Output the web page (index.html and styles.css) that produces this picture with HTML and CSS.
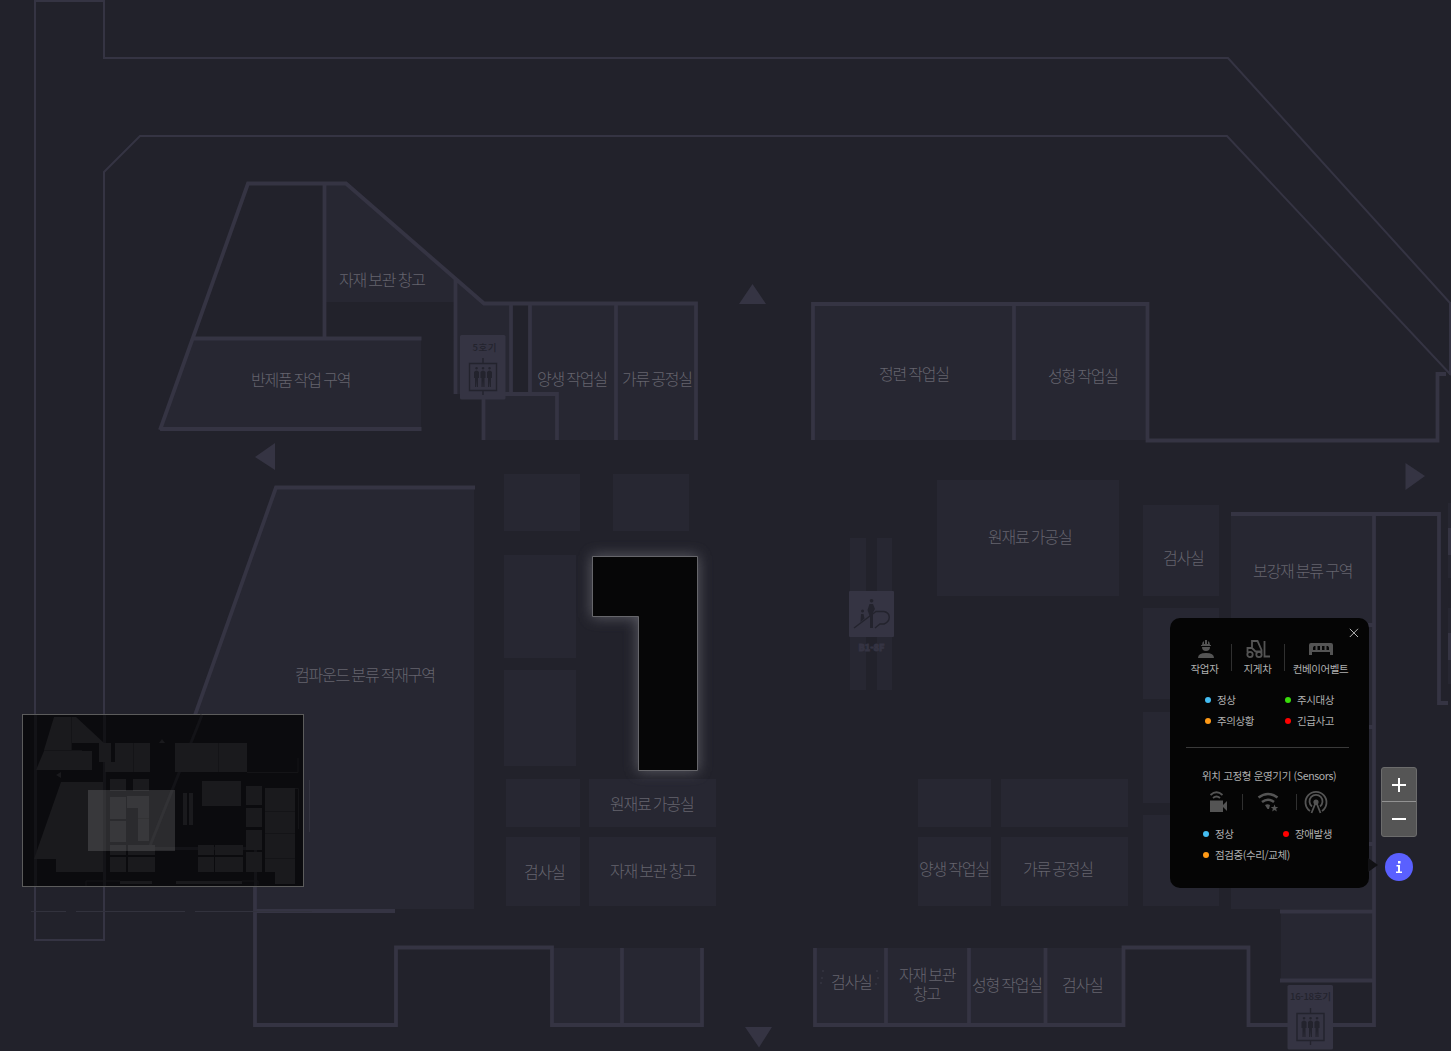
FILE: index.html
```html
<!DOCTYPE html>
<html lang="ko">
<head>
<meta charset="utf-8">
<title>공장 관제 지도</title>
<link rel="stylesheet" href="styles.css">
</head>
<body>
<main class="stage">
<svg class="map" viewBox="0 0 1451 1051" width="1451" height="1051">
  <defs>
    <filter id="glow" x="-30%" y="-30%" width="160%" height="160%"><feGaussianBlur stdDeviation="7"/></filter>
    <g id="lift">
      <rect class="wall-fill" width="45.500" height="64.500" rx="1.500"/>
      <path class="ink-line" d="M9.500 28.500h27v27h-27zM23 23v5M23 56v4"/>
      <g class="ink">
        <path id="man" d="M16.500 34.500a1.300 1.300 0 1 1 .1 0zM14 37q2.500-3 5 0v6h-1v9h-1.100l-.4-7-.4 7H15v-9h-1z"/>
        <use href="#man" x="6.500"/><use href="#man" x="13"/>
      </g>
    </g>
  </defs>

  <g class="room">
    <path d="M325 184H346L455 279V302H325zM193 339H421V429H160zM455 279L484 304H511V394H455zM484 394H557V440H484zM530 304H696V440H557V394H530zM813 304H1147V440H813z"/>
    <path d="M276 488H474V909H255V850H147z"/>
    <path d="M504 474h76v57h-76zM613 474h76v57h-76zM504 555h72v103h-72zM504 670h72v96h-72zM506 779h74v48h-74zM589 779h127v48H589zM506 837h74v69h-74zM589 837h127v69H589z"/>
    <path d="M937 480h182v116H937zM1143 505h76v91h-76zM1143 608h76v91h-76zM1143 712h76v91h-76zM1143 815h76v91h-76zM918 779h73v48h-73zM1001 779h127v48h-127zM918 837h73v69h-73zM1001 837h127v69h-127z"/>
    <path d="M1231 514h143V909h-143zM1281 911h93v69h-93zM552 948H702V1025H552zM815 948H1123V1025H815z"/>
    <path d="M850 538h16v152h-16zM877 538h15v152h-15zM1448 503h3v75h-3zM1448 608h3v76h-3z"/>
  </g>

  <path class="road" d="M35 1H104V58H1228L1451 304M35 0V940H104V172L140 136H1227L1451 375M1450 302V375"/>

  <g class="wall">
    <path d="M193 338.500H421.500M160 429H421.500M160 430L248 183.500H346L484 303.500H696V440M324.500 184V338M455.500 279V394M511 304V394M530 304V394M483.500 394V440M484 394H557V440H557M616 304V440"/>
    <path d="M813 440V304H1147.500V440.500H1437.500V374H1446M1014 304V440"/>
    <path d="M475 487.500H276L147 850H255V1025H396V947.500H552V1025H702V948M255 911H395M622 948V1025"/>
    <path d="M815 948V1025H1123.500V947.500H1248.500V1025H1374V514M886 948V1025M969 948V1025M1045.500 948V1025M1231 514H1439V703H1448M1280 911.500H1374M1280 980.500H1374M1368 625H1374M1368 727H1374M1368 844H1374"/>
  </g>
  <path class="wall-fill" d="M752.500 284L766 304H739zM255 457L275 443V470zM1425 476L1405.500 463V490zM745 1027H772L759 1047.500zM1448 528h3v27h-3zM1448 633h3v27h-3z"/>

  <use href="#lift" x="460" y="335"/>
  <use href="#lift" x="1287.500" y="985"/>
  <text class="tag" x="472.500" y="351" textLength="24">5호기</text>
  <text class="tag" x="1290" y="999.500" textLength="41">16-18호기</text>

  <rect class="wall-fill" x="849" y="591" width="45" height="46" rx="1"/>
  <path class="ink-line" d="M854 628L876 611.500H884C891 613 891 621 884 624H880L875 628"/>
  <path class="ink" d="M871.500 602.500a1.800 1.800 0 1 1 .1 0zM869.500 604h3.500l2 5-2 3.500V628h-3v-11l-2.500-7zM862.500 612.500a1.500 1.500 0 1 1 .1 0zM861 614h2.500l1 4.500-4 3.500z"/>
  <text class="floor" x="858.500" y="651" textLength="26">B1-8F</text>

  <g class="label">
    <text x="339" y="286">자재 보관 창고</text>
    <text x="251" y="386">반제품 작업 구역</text>
    <text x="537" y="385">양생 작업실</text>
    <text x="622" y="385">가류 공정실</text>
    <text x="879" y="380">정련 작업실</text>
    <text x="1048" y="382">성형 작업실</text>
    <text x="988" y="543">원재료 가공실</text>
    <text x="1163" y="564">검사실</text>
    <text x="1253" y="577">보강재 분류 구역</text>
    <text x="295" y="681">컴파운드 분류 적재구역</text>
    <text x="610" y="810">원재료 가공실</text>
    <text x="524" y="878">검사실</text>
    <text x="610" y="877">자재 보관 창고</text>
    <text x="919" y="875">양생 작업실</text>
    <text x="1023" y="875">가류 공정실</text>
    <text x="831" y="988">검사실</text>
    <text><tspan x="899" y="981">자재 보관</tspan><tspan x="913" y="1000">창고</tspan></text>
    <text x="972" y="991">성형 작업실</text>
    <text x="1062" y="991">검사실</text>
  </g>
  <path class="specks" d="M823 970v2M822 977v2M821 982v2M877 970v2M878 977v2M876 983v2"/>

  <path class="halo" filter="url(#glow)" d="M593 557H697V770H639V616H593z"/>
  <path class="selected" d="M592.500 556.500H697.500V770.500H638.500V616.500H592.500z"/>
  <path class="trace" d="M31 911.500H66M76 911.500H185M195 911.500H312M309.500 780V832"/>
</svg>

<svg class="minimap" viewBox="0 0 282 173" width="282" height="173">
  <rect class="mini-frame" x=".5" y=".5" width="281" height="172"/>
  <path class="mini-trace" d="M13.500 1V172M82.500 1V172M180 1L127 134.500H233.500V172"/>
  <g class="mini-room">
    <path d="M32 3H54L82 29H49V36H22zM22 37H70V56H14zM77 29H89V48H77zM93 29H128V58H83V48H93zM153 29H225V58H153z"/>
    <path d="M39 68H81V158H34V145H12zM88 65h16v12H88zM111 65h16v12h-16zM88 83h16v22H88zM88 107h16v21H88zM105 82h22v45h-11V94h-11zM88 131h16v10H88zM106 131h27v10h-27zM88 143h16v15H88zM106 143h27v15h-27z"/>
    <path d="M180 67h39v25h-39zM224 0zM224 72h16v19h-16zM224 94h16v19h-16zM224 116h16v20h-16zM224 138h16v20h-16zM243 74h30v84h-30zM253 158h20v12h-20zM176 131h16v10h-16zM193 131h28v10h-28zM176 143h16v15h-16zM193 143h28v15h-28zM98 167h32v3H98zM154 167h66v3h-66zM161 79h4v32h-4zM167 79h4v32h-4zM140 25l3 4h-6zM34 61l5-3v6z"/>
  </g>
  <path class="mini-grid" d="M49.500 3V36M22 36.500H60M111.500 29V58M196.500 29V58M225 58.500H276V44M243 97.500H273M243 119.500H273M243 144.500H273M116 104.500H127M273 74.500H276.500V115M64 172V167H98M220 167H236V171"/>
  <rect class="mini-view" x="66" y="76" width="87" height="61"/>
</svg>

<section class="legend">
  <svg class="close" viewBox="0 0 10 10" width="10" height="10"><path d="M.8.8L9 9M9 .8L.8 9"/></svg>
  <div class="kinds">
    <div class="kind">
      <svg class="worker" viewBox="0 0 18 20" width="18" height="20"><path d="M5 6Q5 3 7 2V5H8V1H10V5H11V2Q13 3 13 6H14V7H4V6zM5 8H13Q13 12 9 12T5 8zM1 19Q1 14 9 14T17 19z"/></svg>
      <span>작업자</span>
    </div>
    <div class="kind">
      <svg viewBox="0 0 24 20" width="24" height="20"><path class="stroke" d="M6 9V2H11.500L15.500 11V14M1.500 13.500V9H6L9.500 12.500H15M18.500 2V17.500H24"/><circle class="stroke" cx="4" cy="15.500" r="2.700"/><circle class="stroke" cx="13" cy="15.500" r="2.700"/></svg>
      <span>지게차</span>
    </div>
    <div class="kind wide">
      <svg viewBox="0 0 24 20" width="24" height="20"><path fill-rule="evenodd" d="M2 4H22Q24 4 24 6V16H21V13H3V16H0V6Q0 4 2 4zM5 7Q3.500 8 4 11H6.500V7zM8.500 7V11H11V7zM13 7V11H15.500V7zM17.500 7V11H20Q20.500 8 19 7z"/></svg>
      <span>컨베이어벨트</span>
    </div>
  </div>
  <ul class="states">
    <li class="blue">정상</li><li class="green">주시대상</li>
    <li class="orange">주의상황</li><li class="red">긴급사고</li>
  </ul>
  <h2>위치 고정형 운영기기 (Sensors)</h2>
  <div class="sensors">
    <svg viewBox="0 0 20 24" width="20" height="24"><path d="M1 10.500H14V15L18 11V21L14 17V22H1z"/><path class="stroke" d="M1.500 5Q7.500-.5 13.500 5M4 8Q7.500 5 11 8"/></svg>
    <i></i>
    <svg viewBox="0 0 22 24" width="22" height="24"><path class="stroke heavy" d="M1.500 7.500Q11 .5 20.500 7.500M5 12Q11 7.500 17 12"/><path d="M8 15Q10.500 13.500 13 15L12 19H10.500zM17.500 14.500l1 2.600h2.700l-2.100 1.700.8 2.700-2.400-1.600-2.400 1.600.8-2.700-2.100-1.700h2.700z"/></svg>
    <i></i>
    <svg viewBox="0 0 24 24" width="24" height="24"><path class="stroke" d="M6 21A10.500 10.500 0 1 1 18 21M8 16.500A6.500 6.500 0 1 1 16 16.500M11.500 13L7.500 23M12.500 13L16.500 23"/><circle cx="12" cy="12" r="2.600"/></svg>
  </div>
  <ul class="states lower">
    <li class="blue">정상</li><li class="red">장애발생</li>
    <li class="orange">점검중(수리/교체)</li>
  </ul>
</section>

<nav class="tools">
  <div class="zoom">
    <button><svg viewBox="0 0 14 14" width="14" height="14"><path d="M7 0V14M0 7H14"/></svg></button>
    <button><svg viewBox="0 0 14 14" width="14" height="14"><path d="M0 7H14"/></svg></button>
  </div>
  <button class="info"><svg viewBox="0 0 6 12" width="6" height="12"><path d="M2 0H4.500V2.500H2zM.5 4H4V10.500H6V12H0V10.500H2V5.500H.5z"/></svg></button>
</nav>
</main>
</body>
</html>
```
FILE: styles.css
```css
* { box-sizing: border-box; }
body { margin: 0; background: #22222b; font-family: "Noto Sans CJK KR", "Noto Sans", sans-serif; overflow: hidden; }
.stage { position: relative; width: 1451px; height: 1051px; overflow: hidden; }
.map { display: block; }
.room { fill: #272732; }
.road { fill: none; stroke: #353443; stroke-width: 2; }
.wall { fill: none; stroke: #353443; stroke-width: 3.8; }
.wall-fill { fill: #353443; }
.ink { fill: #23232d; }
.ink-line { fill: none; stroke: #23232d; stroke-width: 1.4; }
.tag { font-size: 9.5px; font-weight: 500; fill: #23232d; }
.floor { font-size: 9px; font-weight: 900; fill: #353443; stroke: #353443; stroke-width: .8; }
.label { fill: #65646e; font-size: 16px; font-weight: 300; letter-spacing: -1.2px; word-spacing: -1px; }
.specks { stroke: #3d3d49; stroke-width: 1; }
.halo { fill: #6c6c74; stroke: #6c6c74; stroke-width: 3; opacity: .75; }
.selected { fill: #060607; stroke: #66666b; }
.trace { fill: none; stroke: #32323d; }

.minimap { position: absolute; left: 22px; top: 714px; }
.mini-frame { fill: #0b0b0e; stroke: #5c5c5c; }
.mini-trace { fill: none; stroke: #131317; stroke-width: 3; }
.mini-room { fill: #1a1a1d; }
.mini-grid { fill: none; stroke: #141417; }
.mini-view { fill: rgba(255, 255, 255, .135); }

.legend { position: absolute; left: 1170px; top: 618px; width: 199px; height: 270px; border-radius: 10px; background: #050505; color: #b0b0b0; font-size: 11px; }
.legend::after { content: ""; position: absolute; left: 198px; top: 240px; border: solid transparent; border-width: 7px 0 7px 10px; border-left-color: #111114; }
.legend svg { fill: #545454; }
.legend .close { position: absolute; left: 179px; top: 10px; fill: none; stroke: #b4b4b4; stroke-width: 1; }
.kinds { display: flex; padding: 21px 0 0 8px; }
.kind { position: relative; width: 53px; height: 39px; display: flex; flex-direction: column; align-items: center; gap: 3px; white-space: nowrap; font-size: 10.5px; line-height: 14px; letter-spacing: -.4px; }
.kind svg { flex: none; }
.kind .worker { margin-left: 3px; }
.kind.wide { width: 73px; }
.kind + .kind::before { content: ""; position: absolute; left: 0; top: 5px; width: 1px; height: 27px; background: #303030; }
.stroke { fill: none; stroke: #545454; stroke-width: 1.8; }
.heavy { stroke-width: 2.6; }
.states { list-style: none; margin: 14px 20px 0 16px; padding: 0 0 0 19px; display: grid; grid-template-columns: 80px 1fr; grid-auto-rows: 21px; height: 56px; line-height: 16px; font-size: 10.5px; letter-spacing: -.4px; border-bottom: 1px solid #3a3a3a; white-space: nowrap; }
.states li { display: flex; height: 16px; align-items: center; gap: 6px; }
.states li::before { content: ""; width: 6px; height: 6px; border-radius: 50%; flex: none; }
.states .blue::before { background: #44bdf2; }
.states .green::before { background: #38dc0a; }
.states .orange::before { background: #ff9a16; }
.states .red::before { background: #f00; }
.legend h2 { margin: 20px 0 0 32px; font-size: 10.5px; line-height: 16px; font-weight: 400; letter-spacing: -.35px; white-space: nowrap; }
.sensors { display: flex; align-items: center; height: 24px; margin: 6px 0 0 39px; }
.sensors i { width: 1px; height: 16px; background: #303030; margin: 0 14px 0 13px; }
.sensors i + svg + i { margin: 0 7px 0 17px; }
.states.lower { margin: 12px 0 0 14px; border: 0; }

.tools { position: absolute; left: 1381px; top: 767px; width: 36px; display: flex; flex-direction: column; align-items: center; gap: 16px; }
.tools button { border: 0; padding: 0; display: flex; align-items: center; justify-content: center; }
.zoom { width: 36px; height: 70px; border: 1px solid #6c6c6c; border-radius: 3px; overflow: hidden; background: #555; display: flex; flex-direction: column; }
.zoom button { width: 34px; height: 33px; background: transparent; }
.zoom button + button { height: 35px; border-top: 1px solid #929292; }
.zoom path { stroke: #fff; stroke-width: 2; }
.tools .info { width: 28px; height: 28px; border-radius: 50%; background: #5a60ff; }
.info svg { fill: #fff; }
```
